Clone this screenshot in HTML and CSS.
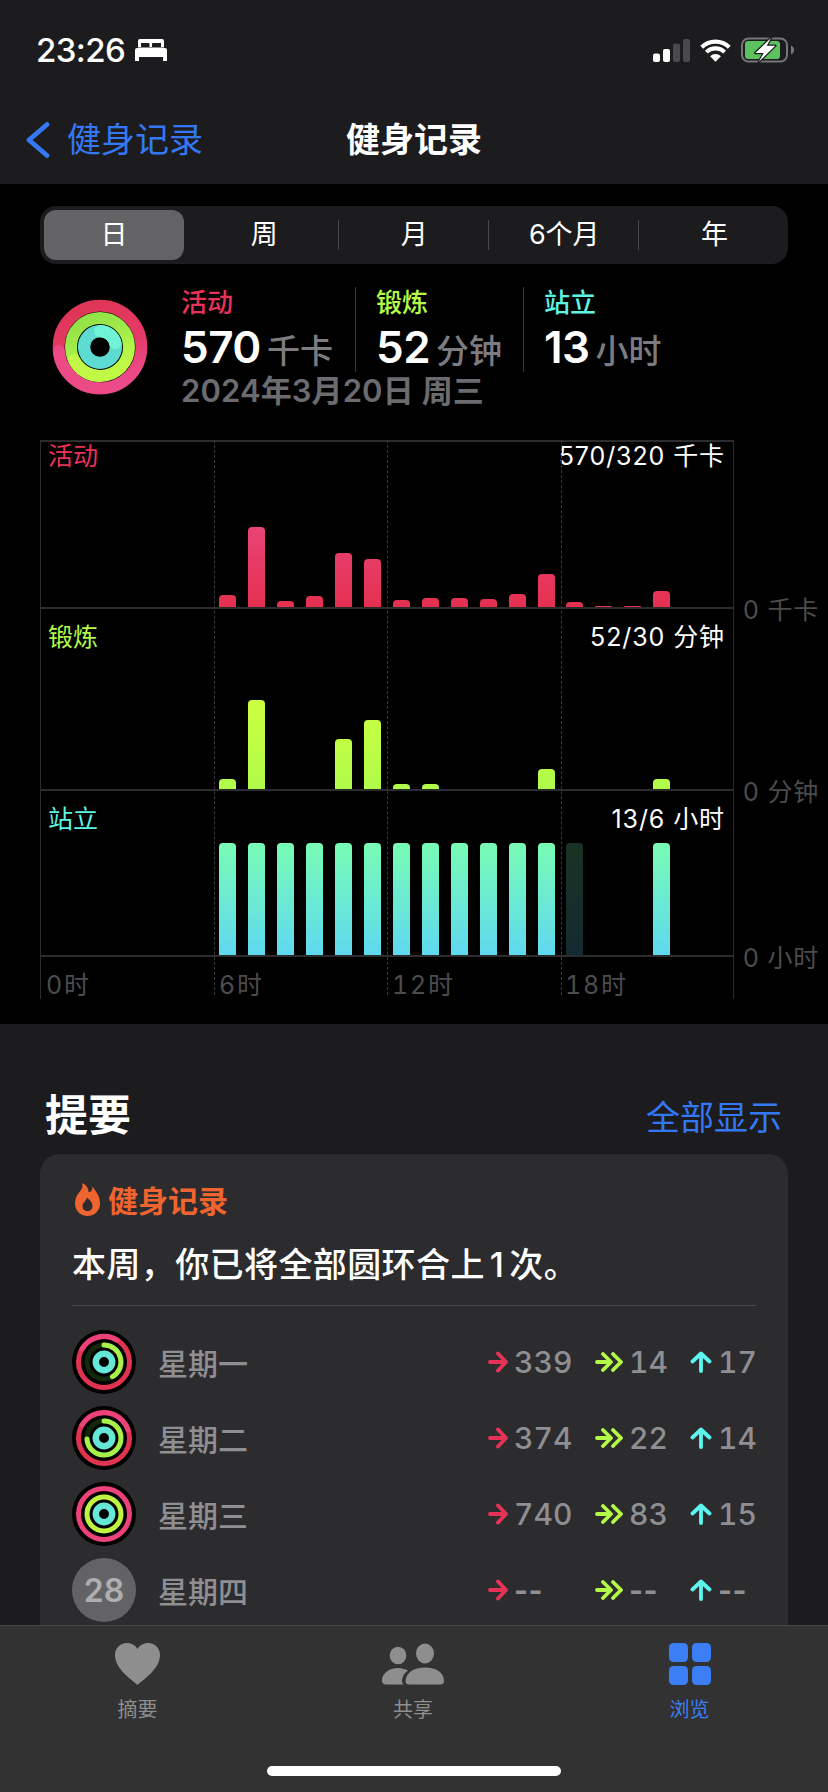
FILE: index.html
```html
<!DOCTYPE html>
<html lang="zh-CN">
<head>
<meta charset="utf-8">
<title>健身记录</title>
<link rel="stylesheet" href="styles.css">
</head>
<body>
<div class="page">
  <header class="top">
    <div class="status">
      <div class="status-left">
        <span class="time">23:26</span>
        <svg class="bed" viewBox="0 0 32 22"><path fill-rule="evenodd" fill="#fff" d="M3 2a2 2 0 0 1 2-2h22a2 2 0 0 1 2 2v6.5H3zM6 4v4h8.5V5a1 1 0 0 0-1-1zM18 4a1 1 0 0 0-1 1v3h9V4z"/><path fill="#fff" d="M2 9h28a2 2 0 0 1 2 2v11h-4v-4H4v4H0V11a2 2 0 0 1 2-2z"/></svg>
      </div>
      <div class="status-right">
        <svg class="signal" viewBox="0 0 37 23"><rect x="0" y="14.500" width="7" height="8.500" rx="2" fill="#fff"/><rect x="10" y="10" width="7" height="13" rx="2" fill="#fff"/><rect x="20" y="4.500" width="7" height="18.500" rx="2" fill="#4a4a4c"/><rect x="30" y="0" width="7" height="23" rx="2" fill="#4a4a4c"/></svg>
        <svg class="wifi" viewBox="0 0 32 24"><path fill="#fff" d="M16 24l-5.600-5.600a8 8 0 0 1 11.200 0z"/><path fill="none" stroke="#fff" stroke-width="4.200" d="M6.600 14.200a13.400 13.400 0 0 1 18.800 0M1.800 9.200a20.200 20.200 0 0 1 28.400 0"/></svg>
        <svg class="battery" viewBox="0 0 53 26"><rect x="1" y="1.500" width="45" height="23" rx="6.500" fill="none" stroke="#77777a" stroke-width="2"/><rect x="4" y="4" width="35" height="18" rx="3" fill="#5cc15f"/><path d="M50 8.500c1.800 0.600 3 2.400 3 4.500s-1.200 3.900-3 4.500z" fill="#77777a"/><path d="M30 1L14.300 16h8.400l-5 9L34.300 8.700h-8.600z" fill="#fff" stroke="#1c1c1e" stroke-width="2.500" stroke-linejoin="round" paint-order="stroke"/></svg>
      </div>
    </div>
    <nav class="nav">
      <a class="back">
        <svg class="chevron" viewBox="0 0 24 36"><path d="M21 2.500L3 18l18 15.500" fill="none" stroke="#3478f6" stroke-width="4.800" stroke-linecap="round" stroke-linejoin="round"/></svg>
        <span>健身记录</span>
      </a>
      <h1 class="title">健身记录</h1>
    </nav>
  </header>

  <main class="day">
    <div class="segments">
      <span class="seg selected">日</span>
      <span class="seg sep">周</span>
      <span class="seg sep">月</span>
      <span class="seg sep">6个月</span>
      <span class="seg last">年</span>
    </div>

    <section class="summary">
      <svg class="big-ring" viewBox="0 0 96 96">
        <defs>
          <linearGradient id="rr" x1="0" y1="0" x2="0.3" y2="1"><stop offset="0" stop-color="#dd3553"/><stop offset="0.6" stop-color="#e53a68"/><stop offset="1" stop-color="#ec4a88"/></linearGradient>
          <linearGradient id="gg" x1="0" y1="0" x2="0.4" y2="1"><stop offset="0" stop-color="#8fe047"/><stop offset="0.6" stop-color="#a6ef4a"/><stop offset="1" stop-color="#c0fa47"/></linearGradient>
        </defs>
        <circle cx="48" cy="48" r="41.400" fill="none" stroke="url(#rr)" stroke-width="11.800"/>
        <path d="M48 89.400A41.400 41.400 0 0 1 6.700 52" fill="none" stroke="#ec4a86" stroke-width="11.800" stroke-linecap="round"/>
        <circle cx="48" cy="48" r="29" fill="none" stroke="url(#gg)" stroke-width="12"/>
        <path d="M48 77A29 29 0 0 1 22 61" fill="none" stroke="#c0fa47" stroke-width="12" stroke-linecap="round"/>
        <circle cx="48" cy="48" r="15.900" fill="none" stroke="#5fdcd2" stroke-width="12.300"/>
        <path d="M48 32.100A15.900 15.900 0 0 1 63.300 44" fill="none" stroke="#6ff5d6" stroke-width="12.300" stroke-linecap="round"/>
      </svg>
      <div class="summary-text">
        <div class="metrics">
          <div class="metric m-move">
            <div class="metric-label red">活动</div>
            <div class="metric-value">570<span class="unit">千卡</span></div>
          </div>
          <div class="metric m-ex">
            <div class="metric-label green">锻炼</div>
            <div class="metric-value">52<span class="unit">分钟</span></div>
          </div>
          <div class="metric m-st">
            <div class="metric-label cyan">站立</div>
            <div class="metric-value">13<span class="unit">小时</span></div>
          </div>
        </div>
        <div class="date">2024年3月20日 周三</div>
      </div>
    </section>

    <section class="chart">
      <div class="row row-move">
        <div class="plot">
          <span class="plot-label first red">活动</span>
          <span class="plot-total first">570/320 千卡</span>
          <div class="bars red-bars">
            <i style="grid-column:7;height:12px"></i><i style="grid-column:8;height:80px"></i><i style="grid-column:9;height:6px"></i><i style="grid-column:10;height:11px"></i><i style="grid-column:11;height:54px"></i><i style="grid-column:12;height:48px"></i><i style="grid-column:13;height:7px"></i><i style="grid-column:14;height:9px"></i><i style="grid-column:15;height:9px"></i><i style="grid-column:16;height:8px"></i><i style="grid-column:17;height:13px"></i><i style="grid-column:18;height:33px"></i><i style="grid-column:19;height:5px"></i><i style="grid-column:20;height:1px"></i><i style="grid-column:21;height:1px"></i><i style="grid-column:22;height:16px"></i>
          </div>
        </div>
        <span class="axis">0 千卡</span>
      </div>
      <div class="row row-ex">
        <div class="plot">
          <span class="plot-label green">锻炼</span>
          <span class="plot-total">52/30 分钟</span>
          <div class="bars green-bars">
            <i style="grid-column:7;height:10px"></i><i style="grid-column:8;height:89px"></i><i style="grid-column:11;height:50px"></i><i style="grid-column:12;height:69px"></i><i style="grid-column:13;height:5px"></i><i style="grid-column:14;height:5px"></i><i style="grid-column:18;height:20px"></i><i style="grid-column:22;height:10px"></i>
          </div>
        </div>
        <span class="axis">0 分钟</span>
      </div>
      <div class="row row-st">
        <div class="plot">
          <span class="plot-label cyan">站立</span>
          <span class="plot-total">13/6 小时</span>
          <div class="bars cyan-bars">
            <i style="grid-column:7"></i><i style="grid-column:8"></i><i style="grid-column:9"></i><i style="grid-column:10"></i><i style="grid-column:11"></i><i style="grid-column:12"></i><i style="grid-column:13"></i><i style="grid-column:14"></i><i style="grid-column:15"></i><i style="grid-column:16"></i><i style="grid-column:17"></i><i style="grid-column:18"></i><i class="dim" style="grid-column:19"></i><i style="grid-column:22"></i>
          </div>
        </div>
        <span class="axis">0 小时</span>
      </div>
      <div class="hours">
        <span>0时</span><span>6时</span><span>12时</span><span>18时</span>
      </div>
      <div class="dashes"><span></span><span></span><span></span><span></span></div>
    </section>
  </main>

  <section class="digest">
    <div class="digest-head">
      <h2>提要</h2>
      <a class="show-all">全部显示</a>
    </div>
    <article class="card">
      <div class="card-title">
        <svg class="flame" viewBox="0 0 25 33"><path fill="#f0642f" fill-rule="evenodd" d="M7 0c1.500 4-.5 6.500-3 9.500C1.500 13 0 16 0 20.500 0 27.500 5.500 33 12.500 33S25 27.500 25 20.500C25 12.500 20.500 8 17.500 3.500c0 3.500-1.500 6-4 5.500C13.500 5 11 1.500 7 0zM12.500 28c-3 0-5-2-5-5 0-3.500 3.500-4.500 4.500-8.500 2.500 2.500 5.500 4.800 5.500 8.500 0 3-2 5-5 5z"/></svg>
        <span>健身记录</span>
      </div>
      <p class="sentence">本周，你已将全部圆环合上<span class="num">1</span>次。</p>
      <div class="days">
        <div class="day-row">
          <svg class="mini" viewBox="0 0 64 64">
            <circle cx="32" cy="32" r="32"/>
            <circle class="t-r" cx="32" cy="32" r="25.500"/>
            <path class="a-p" d="M10 19A25.500 25.500 0 0 1 45 10"/>
            <circle class="t-g" cx="32" cy="32" r="17"/>
            <path class="a-g" d="M32 15A17 17 0 0 1 40.500 46.700"/>
            <circle class="t-c" cx="32" cy="32" r="8.200"/>
          </svg>
          <span class="day-name">星期一</span>
          <div class="stats">
            <span class="stat"><svg class="ar" viewBox="0 0 20 22"><path class="red-s" d="M2 11h15M10 2.500l8 8.500-8 8.500"/></svg>339</span>
            <span class="stat"><svg class="ar2" viewBox="0 0 28 20"><path class="green-s" d="M2 10h13M8 2l8 8-8 8M18 2l8 8-8 8"/></svg>14</span>
            <span class="stat"><svg class="ar3" viewBox="0 0 22 22"><path class="cyan-s" d="M11 20V3M2.500 10.500L11 2.500l8.500 8"/></svg>17</span>
          </div>
        </div>
        <div class="day-row">
          <svg class="mini" viewBox="0 0 64 64">
            <circle cx="32" cy="32" r="32"/>
            <circle class="t-r" cx="32" cy="32" r="25.500"/>
            <path class="a-p" d="M10 19A25.500 25.500 0 0 1 56 24"/>
            <circle class="t-g" cx="32" cy="32" r="17"/>
            <path class="a-g" d="M32 15A17 17 0 1 1 15 33"/>
            <circle class="t-c" cx="32" cy="32" r="8.200"/>
          </svg>
          <span class="day-name">星期二</span>
          <div class="stats">
            <span class="stat"><svg class="ar" viewBox="0 0 20 22"><path class="red-s" d="M2 11h15M10 2.500l8 8.500-8 8.500"/></svg>374</span>
            <span class="stat"><svg class="ar2" viewBox="0 0 28 20"><path class="green-s" d="M2 10h13M8 2l8 8-8 8M18 2l8 8-8 8"/></svg>22</span>
            <span class="stat"><svg class="ar3" viewBox="0 0 22 22"><path class="cyan-s" d="M11 20V3M2.500 10.500L11 2.500l8.500 8"/></svg>14</span>
          </div>
        </div>
        <div class="day-row">
          <svg class="mini" viewBox="0 0 64 64">
            <circle cx="32" cy="32" r="32"/>
            <circle class="t-p" cx="32" cy="32" r="25.500"/>
            <circle class="t-lime" cx="32" cy="32" r="17"/>
            <circle class="t-c" cx="32" cy="32" r="8.200"/>
          </svg>
          <span class="day-name">星期三</span>
          <div class="stats">
            <span class="stat"><svg class="ar" viewBox="0 0 20 22"><path class="red-s" d="M2 11h15M10 2.500l8 8.500-8 8.500"/></svg>740</span>
            <span class="stat"><svg class="ar2" viewBox="0 0 28 20"><path class="green-s" d="M2 10h13M8 2l8 8-8 8M18 2l8 8-8 8"/></svg>83</span>
            <span class="stat"><svg class="ar3" viewBox="0 0 22 22"><path class="cyan-s" d="M11 20V3M2.500 10.500L11 2.500l8.500 8"/></svg>15</span>
          </div>
        </div>
        <div class="day-row">
          <span class="day-circle">28</span>
          <span class="day-name">星期四</span>
          <div class="stats empty">
            <span class="stat"><svg class="ar" viewBox="0 0 20 22"><path class="red-s" d="M2 11h15M10 2.500l8 8.500-8 8.500"/></svg>--</span>
            <span class="stat"><svg class="ar2" viewBox="0 0 28 20"><path class="green-s" d="M2 10h13M8 2l8 8-8 8M18 2l8 8-8 8"/></svg>--</span>
            <span class="stat"><svg class="ar3" viewBox="0 0 22 22"><path class="cyan-s" d="M11 20V3M2.500 10.500L11 2.500l8.500 8"/></svg>--</span>
          </div>
        </div>
      </div>
    </article>
  </section>

  <footer class="tabbar">
    <div class="tab">
      <svg class="tab-icon heart" viewBox="0 0 45 42"><path fill="#8e8e8e" d="M22.500 42C16 36 0 26 0 12 0 5 5 0 12 0c4.500 0 8.500 2.500 10.500 6C24.500 2.500 28.500 0 33 0c7 0 12 5 12 12 0 14-16 24-22.500 30z"/></svg>
      <span>摘要</span>
    </div>
    <div class="tab">
      <svg class="tab-icon people" viewBox="0 0 62 41"><g fill="#8e8e8e"><ellipse cx="16" cy="12" rx="8.300" ry="8.800"/><ellipse cx="43" cy="10" rx="9" ry="10"/><path d="M27 41q-3.500 0-3.500-3.500C24 29 32 24 43 24s19 5 19 13.500q0 3.500-4 3.500z"/><path d="M4 41q-4 0-4-4c0-7 7-12.500 16-12.500 4 0 8 1.500 10 2.500-4 2.500-6 7-6 10q0 2.500 1.500 4z"/></g></svg>
      <span>共享</span>
    </div>
    <div class="tab active">
      <span class="tab-icon grid-icon"><i></i><i></i><i></i><i></i></span>
      <span>浏览</span>
    </div>
    <div class="home"></div>
  </footer>
</div>
</body>
</html>
```
FILE: styles.css
```css
* { box-sizing: border-box; }
html, body { margin: 0; padding: 0; background: #000; }
body { font-family: Inter, "Noto Sans CJK SC", sans-serif; color: #fff; }
h1, h2, p { margin: 0; }

.page { position: relative; width: 828px; height: 1792px; overflow: hidden; background: #000; }

/* header */
.top { height: 184px; background: #1c1c1e; }
.status { height: 100px; display: flex; align-items: center; justify-content: space-between; padding: 0 34px 0 36px; }
.status-left { display: flex; align-items: center; gap: 10px; }
.time { font-size: 33px; font-weight: 550; line-height: 40px; letter-spacing: -0.6px; }
.bed { width: 32px; height: 22px; }
.status-right { display: flex; align-items: center; gap: 10px; }
.signal { width: 37px; height: 23px; }
.wifi { width: 31px; height: 24px; }
.battery { width: 53px; height: 26px; }

.nav { height: 84px; padding: 0 0 4px 26px; display: grid; grid-template-columns: 1fr auto 1fr; align-items: center; }
.back { display: flex; align-items: center; gap: 17px; font-size: 34px; color: #3478f6; line-height: 44px; grid-column: 1; }
.chevron { width: 24px; height: 36px; }
.title { grid-column: 2; font-size: 34px; font-weight: 600; line-height: 44px; margin-left: -26px; }

/* segmented control */
.day { height: 840px; padding-top: 22px; }
.segments { margin: 0 40px; height: 58px; padding: 4px; background: #1c1c1e; border-radius: 16px; display: grid; grid-template-columns: 145px 150px 150px 150px 1fr; align-items: center; font-size: 27px; }
.seg { display: flex; align-items: center; justify-content: center; height: 30px; line-height: 30px; }
.seg.selected { width: 140px; height: 50px; background: #636366; border-radius: 12px; }
.seg.sep { border-right: 1.5px solid #48484a; padding-left: 1.5px; }
.seg.last { padding-left: 6px; }

/* summary */
.summary { margin-top: 23px; display: flex; padding-left: 52px; }
.big-ring { width: 96px; height: 96px; margin-top: 12px; margin-right: 33px; flex: none; }
.metrics { display: flex; height: 85px; }
.metric { border-right: 1.5px solid #3a3a3c; }
.m-move { width: 175px; }
.m-ex { width: 168px; padding-left: 20px; }
.m-st { border-right: 0; padding-left: 20px; }
.metric-label { font-size: 26px; line-height: 32px; font-weight: 500; }
.metric-value { margin-top: 3px; font-size: 44px; line-height: 50px; font-weight: 600; white-space: nowrap; letter-spacing: -0.5px; }
.unit { margin-left: 6px; font-size: 33px; font-weight: 500; color: #7c7c80; letter-spacing: 0; }
.date { font-size: 31px; line-height: 38px; font-weight: 600; letter-spacing: 0.1px; color: #6c6c70; white-space: nowrap; }
.red { color: #e9325a; }
.green { color: #b4fa46; }
.cyan { color: #5df5e4; }

/* chart */
.chart { position: relative; margin: 30px 0 0 40px; }
.row { display: flex; }
.row-move { height: 169px; }
.row-ex { height: 182px; }
.row-st { height: 166px; }
.plot { position: relative; width: 694px; height: 100%; border: solid #2c2c2e; border-width: 0 1.5px 2px 1.5px; }
.row-move .plot { border-top-width: 2px; }
.plot-label { position: absolute; left: 7px; top: 12px; font-size: 25px; line-height: 32px; }
.plot-total { position: absolute; right: 8px; top: 12px; font-size: 25px; line-height: 32px; white-space: nowrap; letter-spacing: 0.9px; }
.plot-label.first, .plot-total.first { top: -2px; }
.axis { align-self: flex-end; margin: 0 0 -17px 9px; font-size: 25px; line-height: 32px; letter-spacing: 0.8px; color: #4c4c4e; white-space: nowrap; }
.bars { position: absolute; top: 0; bottom: 0; left: -1px; width: 694px; display: grid; grid-template-columns: repeat(24, 1fr); grid-template-rows: 1fr; align-items: end; justify-items: center; }
.bars i { display: block; grid-row: 1; width: 17px; border-radius: 4px 4px 0 0; background-position: bottom; background-repeat: no-repeat; }
.red-bars i { background-image: linear-gradient(#e8467c, #e5304f); background-size: 100% 90px; }
.green-bars i { background-image: linear-gradient(#ccff3f, #b0fb4a); background-size: 100% 90px; }
.cyan-bars i { height: 112px; background-image: linear-gradient(#78fcb4, #60d8f0); }
.cyan-bars i.dim { opacity: 0.2; }
.hours { width: 694px; height: 42px; padding-top: 13px; display: grid; grid-template-columns: repeat(4, 1fr); border: solid #2c2c2e; border-width: 0 1.5px; font-size: 25px; line-height: 30px; letter-spacing: 1.8px; font-variant-numeric: tabular-nums; color: #4c4c4e; }
.hours span { padding-left: 5px; }
.dashes { position: absolute; left: 0; top: 0; bottom: 4px; width: 694px; display: grid; grid-template-columns: repeat(4, 1fr); }
.dashes span + span { border-left: 1px dashed #3a3a3c; }

/* digest */
.digest { background: #1c1c1e; height: 768px; }
.digest-head { height: 130px; padding: 66px 46px 0 45px; display: flex; justify-content: space-between; align-items: flex-start; }
.digest-head h2 { font-size: 43px; line-height: 50px; font-weight: 700; }
.show-all { font-size: 34px; line-height: 46px; margin-top: 5px; color: #3478f6; }
.card { margin: 0 40px; height: 560px; padding: 26px 32px 0; background: #2c2c2e; border-radius: 20px; }
.card-title { display: flex; align-items: center; gap: 8px; height: 38px; color: #f0642f; font-size: 30px; font-weight: 600; padding-left: 3px; }
.flame { width: 25px; height: 33px; }
.sentence { margin-top: 24px; padding-bottom: 17px; font-size: 34px; line-height: 46px; font-weight: 500; letter-spacing: 0.4px; white-space: nowrap; border-bottom: 1px solid #48484a; }
.num { margin: 0 5px; }
.days { padding-top: 18px; }
.day-row { height: 76px; display: flex; align-items: center; }
.mini { width: 64px; height: 64px; flex: none; }
.mini circle, .mini path { fill: none; stroke-width: 5; }
.mini > circle:first-child { fill: #000; stroke: none; }
.t-r { stroke: #e0334f; }
.t-p { stroke: #ea4279; }
.a-p { stroke: #ea4279; stroke-linecap: round; }
.t-g { stroke: #13280a; }
.a-g { stroke: #a8f04a; stroke-linecap: round; }
.t-lime { stroke: #bff542; }
.mini .t-c { stroke: #66e8d8; stroke-width: 6.500; }
.day-name { margin-left: 22px; width: 330px; font-size: 30px; font-weight: 500; color: #8e8e93; white-space: nowrap; }
.day-circle { width: 64px; height: 64px; flex: none; border-radius: 50%; background: #636366; color: #aeaeb2; font-size: 32px; font-weight: 600; display: flex; align-items: center; justify-content: center; }
.stats { display: grid; grid-template-columns: 107px 95px 66px; }
.stat { display: flex; align-items: center; gap: 6px; font-size: 30px; line-height: 40px; font-weight: 500; font-variant-numeric: tabular-nums; color: #8e8e93; white-space: nowrap; }
.empty .stat { font-variant-numeric: normal; font-weight: 700; letter-spacing: 0.5px; }
.ar { width: 20px; height: 22px; flex: none; }
.ar2 { width: 28px; height: 20px; flex: none; }
.ar3 { width: 22px; height: 22px; flex: none; }
.ar path, .ar2 path, .ar3 path { fill: none; stroke-width: 3.800; stroke-linecap: round; stroke-linejoin: round; }
.red-s { stroke: #e9325a; }
.green-s { stroke: #b4fa46; }
.cyan-s { stroke: #5df5f0; }

/* tab bar */
.tabbar { position: absolute; left: 0; right: 0; bottom: 0; height: 167px; padding-top: 17px; background: #323233; border-top: 1px solid #47474a; display: grid; grid-template-columns: 275px 276px 277px; align-items: start; }
.tab { display: flex; flex-direction: column; align-items: center; font-size: 20px; line-height: 30px; color: #8e8e8e; }
.tab.active { color: #3b7ef5; }
.tab-icon { height: 42px; margin-bottom: 10px; display: block; }
.heart { width: 45px; }
.people { width: 62px; }
.grid-icon { width: 42px; display: grid; grid-template-columns: 19px 19px; grid-template-rows: 19px 19px; gap: 4px; }
.grid-icon i { background: #3b7ef5; border-radius: 4.500px; }
.home { position: absolute; left: 267px; bottom: 16px; width: 294px; height: 10px; border-radius: 5px; background: #fff; }
```
